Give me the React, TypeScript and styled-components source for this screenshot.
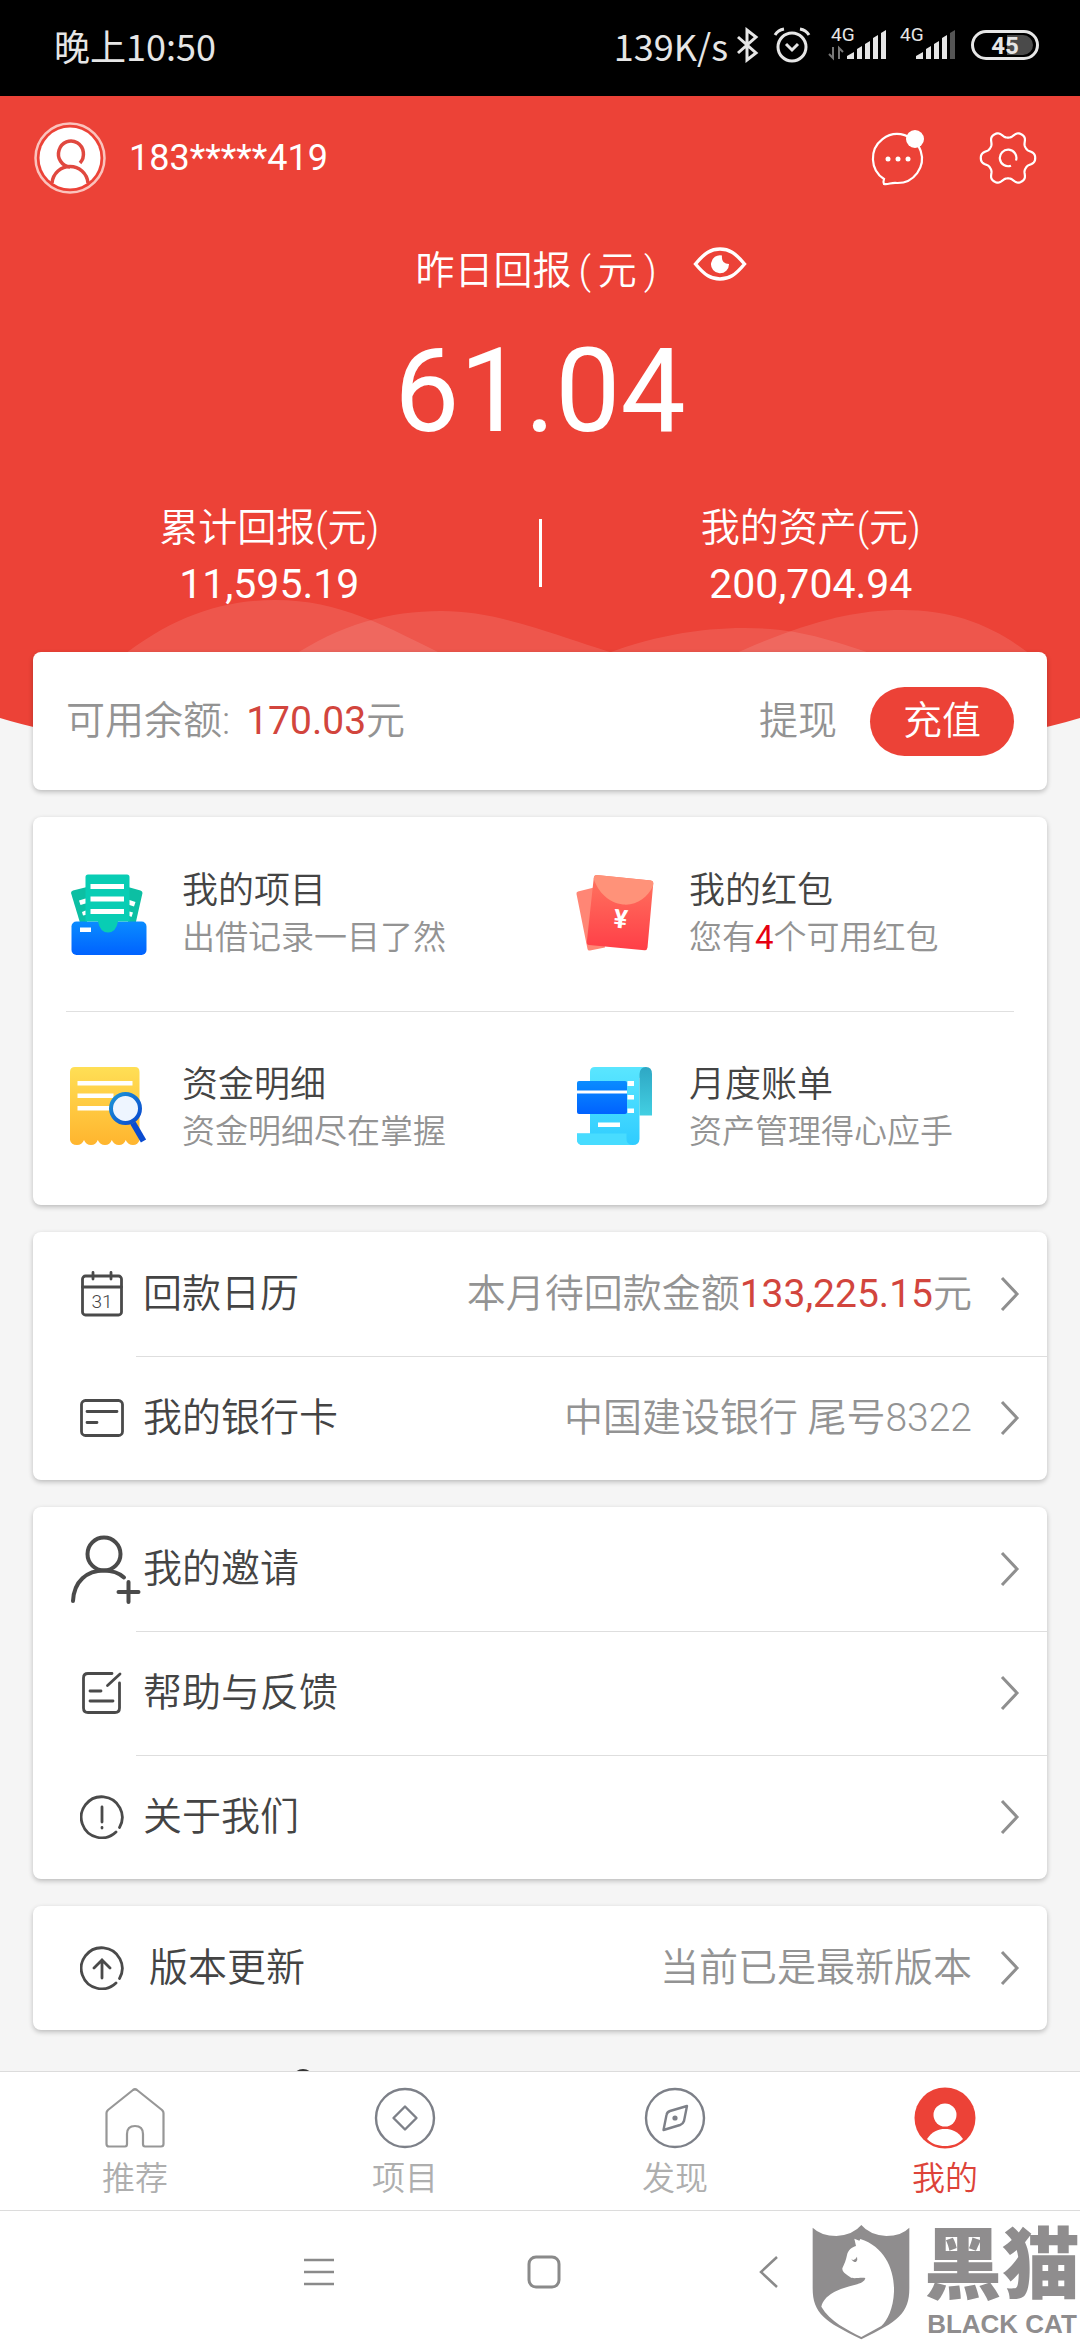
import React from "react";
import styled, { createGlobalStyle, css } from "styled-components";

const RED = "#ec4237";
const INK = "#444444";
const MUTED = "#939393";

const GlobalStyle = createGlobalStyle`
  *, *::before, *::after { box-sizing: border-box; }
  body {
    margin: 0;
    background: #f5f5f5;
    font-family: Roboto, "Noto Sans CJK SC", sans-serif;
    font-weight: 350;
    color: ${INK};
  }
  button {
    margin: 0;
    padding: 0;
    border: 0;
    background: none;
    font: inherit;
    color: inherit;
    cursor: pointer;
  }
  svg { display: block; flex: none; }
`;

const Page = styled.div`
  display: flex;
  flex-direction: column;
  height: 100vh;
`;

/* ---------- status bar ---------- */

const StatusBar = styled.div`
  flex: none;
  display: flex;
  align-items: center;
  justify-content: space-between;
  height: 96px;
  padding: 0 41px 6px 54px;
  background: #000;
  color: #e6e6e6;
  font-family: "Noto Sans CJK SC", sans-serif;
  font-size: 36px;
  font-weight: 400;
  line-height: 48px;
`;

const StatusIcons = styled.div`
  display: flex;
  align-items: center;
  gap: 8px;
`;

/* ---------- scrolling content ---------- */

const Content = styled.main`
  flex: 1;
  min-height: 0;
  overflow: hidden auto;
  scrollbar-width: none;
`;

const Hero = styled.header`
  position: relative;
  padding: 26px 43px 106px 34px;
  background: ${RED};
  color: #fff;
`;

const HeroCurve = styled.svg`
  position: absolute;
  left: 0;
  top: 100%;
  width: 100%;
  height: 60px;
`;

const HeroWaves = styled.svg`
  position: absolute;
  left: 0;
  bottom: 60px;
  width: 100%;
  height: 64px;
`;

const TopRow = styled.div`
  display: flex;
  align-items: center;
  height: 72px;
`;

const Phone = styled.span`
  flex: 1;
  margin-left: 23px;
  font-size: 36px;
  font-weight: 400;
  line-height: 50px;
`;

const TopActions = styled.div`
  display: flex;
  gap: 53px;
`;

const Overview = styled.section`
  position: relative;
  margin: 51px -43px 0 -34px;
`;

const YesterdayRow = styled.div`
  display: grid;
  grid-template-columns: 1fr auto 1fr;
  align-items: start;
  font-size: 39px;
  line-height: 52px;
`;

const YesterdayLabel = styled.div`
  grid-column: 2;
  display: flex;
  gap: 7px;
  padding-right: 8px;
`;

const EyeButton = styled.button`
  justify-self: start;
  margin-left: 28px;
`;

const BigNumber = styled.div`
  margin-top: 26px;
  font-size: 116px;
  font-weight: 400;
  line-height: 136px;
  text-align: center;
`;

const Stats = styled.div`
  display: grid;
  grid-template-columns: 1fr 3px 1fr;
  align-items: center;
  margin-top: 41px;
`;

const Stat = styled.div`
  display: flex;
  flex-direction: column;
  align-items: center;
  font-size: 39px;
  line-height: 56px;
`;

const StatValue = styled.span`
  font-size: 41px;
  font-weight: 400;
`;

const StatDivider = styled.span`
  height: 68px;
  margin-bottom: 6px;
  background: #fff;
`;

const Cards = styled.div`
  position: relative;
  display: flex;
  flex-direction: column;
  gap: 27px;
  margin: -66px 33px 0;
`;

const Card = styled.section`
  border-radius: 8px;
  background: #fff;
  box-shadow: 0 2px 5px rgba(0, 0, 0, 0.24);
`;

const BalanceCard = styled(Card)`
  display: flex;
  align-items: center;
  height: 138px;
  padding: 0 33px;
  font-size: 39px;
  line-height: 56px;
  color: ${MUTED};
`;

const BalanceText = styled.div`
  flex: 1;
`;

const Amount = styled.span<{ $spaced?: boolean }>`
  margin-left: ${(p) => (p.$spaced ? "16px" : "0")};
  font-weight: 400;
  color: #d2453d;
`;

const RechargeButton = styled.button`
  width: 144px;
  height: 69px;
  margin-left: 33px;
  border-radius: 35px;
  background: ${RED};
  color: #fff;
`;

const ShortcutGrid = styled(Card)`
  position: relative;
  display: grid;
  grid-template-columns: 1fr 1fr;

  &::after {
    content: "";
    position: absolute;
    left: 33px;
    right: 33px;
    top: 50%;
    height: 1px;
    background: #e0e0e0;
  }
`;

const Shortcut = styled.button`
  display: flex;
  align-items: center;
  gap: 31px;
  height: 194px;
  padding-left: 34px;
  text-align: left;
`;

const ShortcutText = styled.span`
  display: flex;
  flex-direction: column;
`;

const ShortcutTitle = styled.span`
  font-size: 36px;
  line-height: 48px;
`;

const ShortcutHint = styled.span`
  font-size: 33px;
  line-height: 46px;
  color: ${MUTED};
`;

const Count = styled.span`
  font-weight: 400;
  color: #e60012;
`;

const List = styled(Card)`
  display: flex;
  flex-direction: column;
`;

const ListRow = styled.button`
  position: relative;
  display: flex;
  align-items: center;
  height: 124px;
  padding: 0 27px 0 29px;
  font-size: 39px;
  line-height: 56px;

  & + &::before {
    content: "";
    position: absolute;
    left: 103px;
    right: 0;
    top: 0;
    height: 1px;
    background: #dedede;
  }
`;

const IconSlot = styled.span<{ $wide?: boolean }>`
  display: flex;
  justify-content: center;
  width: 80px;
  margin-right: ${(p) => (p.$wide ? "7px" : "1px")};
`;

const RowLabel = styled.span`
  flex: 1;
  text-align: left;
`;

const RowValue = styled.span`
  margin-right: 28px;
  color: ${MUTED};
`;

const FooterMark = styled.div`
  padding: 39px 0 40px 292px;
`;

/* ---------- bottom bars ---------- */

const TabBar = styled.nav`
  flex: none;
  display: grid;
  grid-template-columns: repeat(4, 1fr);
  height: 140px;
  border-top: 1px solid #dcdcdc;
  border-bottom: 1px solid #dcdcdc;
  background: #fff;
`;

const Tab = styled.button<{ $active?: boolean }>`
  display: flex;
  flex-direction: column;
  align-items: center;
  gap: 6px;
  padding-top: 15px;
  font-size: 33px;
  line-height: 48px;
  color: #aeaeae;
  ${(p) =>
    p.$active &&
    css`
      color: #dd4339;
    `}
`;

const SystemBar = styled.div`
  flex: none;
  position: relative;
  display: flex;
  justify-content: center;
  height: 129px;
  padding: 0 0 8px 8px;
  background: #fff;
`;

const SystemButton = styled.button`
  display: flex;
  align-items: center;
  justify-content: center;
  width: 225px;
`;

const Watermark = styled.div`
  position: absolute;
  right: 0;
  bottom: 0;
  display: flex;
  align-items: flex-end;
  gap: 14px;
  color: #8f8d8e;
`;

const WatermarkText = styled.div`
  display: flex;
  flex-direction: column;
  align-items: center;
  font-family: "Liberation Sans", "Noto Sans CJK SC", sans-serif;
  font-weight: 900;
`;

const WatermarkName = styled.span`
  font-size: 78px;
  line-height: 84px;
`;

const WatermarkLatin = styled.span`
  font-size: 26px;
  line-height: 32px;
`;

/* ---------- icons ---------- */

const Bluetooth = () => (
  <svg width="25" height="36" viewBox="0 0 25 36" fill="none" stroke="#e6e6e6" strokeWidth="3">
    <path d="M2 10 L20 26 L11 33 V3 L20 10 L2 26" />
  </svg>
);

const Alarm = () => (
  <svg width="48" height="36" viewBox="0 0 48 36" fill="none" stroke="#e6e6e6" strokeWidth="3">
    <circle cx="23" cy="20" r="14" />
    <path d="M17 17 L23 23 L29 17" />
    <path d="M6 8 Q9 3 15 2 M31 2 Q37 3 40 8" />
  </svg>
);

const Signal = ({ left, weak }: { left: number; weak?: boolean }) => (
  <svg width={weak ? 60 : 66} height="48" viewBox={`${-left} -6 ${weak ? 60 : 66} 48`} fill="#e6e6e6">
    <text x="0" y="14" fontSize="19" fontFamily="Roboto, sans-serif">4G</text>
    {!weak && <path d="M2 20 V31 L-2 27 M8 32 V21 L12 25" fill="none" stroke="#777" strokeWidth="2" />}
    <path d="M16 32 V29 L23 25 V32Z M26 32 V22 L31 19 V32Z M34 32 V17 L39 14 V32Z M42 32 V11 L47 8 V32Z" />
    <path d="M50 32 V6 L55 3 V32Z" fill={weak ? "#555" : "#e6e6e6"} />
  </svg>
);

const Battery = () => (
  <svg width="72" height="32" viewBox="0 0 72 32">
    <path d="M40 6 H56 A9 9 0 0 1 56 26 H40Z" fill="#4a4a4a" />
    <rect x="5.500" y="2.500" width="65" height="27" rx="13.500" fill="none" stroke="#e6e6e6" strokeWidth="3" />
    <text x="38" y="24.500" fontSize="24" fontFamily="Roboto, sans-serif" fontWeight="700" textAnchor="middle" fill="#e6e6e6">45</text>
  </svg>
);

const Avatar = () => (
  <svg width="72" height="72" viewBox="0 0 72 72" fill="none">
    <circle cx="36" cy="36" r="34.500" stroke="#fbc3bd" strokeWidth="2.500" />
    <circle cx="36" cy="36" r="30.500" fill="#fff" />
    <g stroke="#e0483f" strokeWidth="3.500">
      <path d="M46 41 A12.500 13 0 1 0 36 45" />
      <path d="M18 61 C19 51 27 44.500 36 44.500 C45 44.500 53 51 54 61" />
    </g>
  </svg>
);

const Message = () => (
  <svg width="56" height="60" viewBox="0 0 56 60" fill="none">
    <path d="M14 51 A24.500 24.500 0 1 1 27 55 C22 54 18 57 14 56 Q13 54 14 51Z" stroke="#fff" strokeWidth="2.200" />
    <circle cx="18" cy="31" r="2.500" fill="#fff" />
    <circle cx="28" cy="31" r="2.500" fill="#fff" />
    <circle cx="38" cy="31" r="2.500" fill="#fff" />
    <circle cx="45" cy="11" r="9" fill="#fff" />
  </svg>
);

const gearOutline = Array.from({ length: 180 }, (_, i) => {
  const a = (i / 180) * Math.PI * 2;
  const r = 23.8 + (3.4 * Math.tanh(1.3 * Math.cos(6 * a))) / Math.tanh(1.3);
  return `${(29 + r * Math.cos(a)).toFixed(2)} ${(29 + r * Math.sin(a)).toFixed(2)}`;
}).join(" L");

const Gear = () => (
  <svg width="58" height="58" viewBox="0 0 58 58" fill="none" stroke="#fff" strokeWidth="2.200">
    <path d={`M${gearOutline}Z`} />
    <path d="M37 31.500 A8.300 8.300 0 1 0 32 36.700" />
  </svg>
);

const Eye = () => (
  <svg width="54" height="38" viewBox="0 0 54 38" fill="none">
    <path d="M2.500 19 C12 7.500 18 4 27 4 C36 4 42 7.500 51.500 19 C42 30.500 36 34 27 34 C18 34 12 30.500 2.500 19Z" stroke="#fff" strokeWidth="3.400" />
    <path d="M29 10.500 A9 9 0 1 0 36 19 Q28 19 29 10.500Z" fill="#fff" />
  </svg>
);

const ProjectIcon = () => (
  <svg width="84" height="84" viewBox="0 0 84 84">
    <defs>
      <linearGradient id="tray" x1="0" y1="0" x2="0" y2="1">
        <stop offset="0" stopColor="#0a8cff" />
        <stop offset="1" stopColor="#0062ff" />
      </linearGradient>
    </defs>
    <path d="M4 21 Q4 19 6 18.500 L20 15 V54 H14Z" fill="#0cbfa3" />
    <path d="M75.500 21 Q75.500 19 73.500 18.500 L61 15 V54 H68Z" fill="#0cbfa3" />
    <rect x="4.500" y="49.500" width="75" height="33.500" rx="5" fill="url(#tray)" />
    <path d="M18.500 5 Q18.500 2.500 21 2.500 H60 Q62.500 2.500 62.500 5 V49.500 H51 Q49 60.500 41 60.500 Q33 60.500 31 49.500 H18.500Z" fill="#08cdb4" />
    <g fill="#fff">
      <rect x="23.500" y="12" width="33.500" height="5" />
      <rect x="23.500" y="24.500" width="33.500" height="5" />
      <rect x="23.500" y="37" width="33.500" height="5" />
      <path d="M12 28.500 L18.500 26.500 V31.500 L13.500 33Z M15 40 L18.500 38.500 V43 L16 43.500Z M62.500 28 L68.500 30 L67 34.500 L62.500 33Z M62.500 39.500 L66 40.500 L64.500 45 L62.500 44Z" />
      <rect x="13" y="55.500" width="11" height="4.500" />
    </g>
  </svg>
);

const PacketIcon = () => (
  <svg width="84" height="84" viewBox="0 0 84 84">
    <defs>
      <linearGradient id="packet" x1="0" y1="0" x2="0" y2="1">
        <stop offset="0" stopColor="#ff7560" />
        <stop offset="1" stopColor="#ff3e47" />
      </linearGradient>
    </defs>
    <path d="M2.500 22 Q2 20 4 19.500 L20 15.500 L31 75.500 L16 78.500 Q14 79 13.500 77Z" fill="#ff8675" />
    <path d="M22.500 3 L77 8.500 Q79.500 9 79.300 11 L73.500 75.500 Q73 78.500 70.500 78.200 L15 73 Q12.500 72.500 12.800 70 L19.800 5.500 Q20 3 22.500 3Z" fill="url(#packet)" />
    <path d="M22.500 3 L77 8.500 Q79.500 9 79.300 11 L79 14 C74 25 62 34 49 32.500 C35 31 24 20 19.800 7 Q20 3 22.500 3Z" fill="#ff9279" />
    <text x="46.500" y="56" transform="rotate(6 46.500 48)" fontSize="26" fontWeight="700" fontFamily="Roboto, sans-serif" textAnchor="middle" fill="#fff">¥</text>
  </svg>
);

const DetailIcon = () => (
  <svg width="84" height="84" viewBox="0 0 84 84">
    <defs>
      <linearGradient id="receipt" x1="0" y1="0" x2="0" y2="1">
        <stop offset="0" stopColor="#ffdf55" />
        <stop offset="1" stopColor="#ffb52e" />
      </linearGradient>
      <linearGradient id="lens" x1="0" y1="0" x2="1" y2="1">
        <stop offset="0" stopColor="#1c95d6" />
        <stop offset="1" stopColor="#0a48cf" />
      </linearGradient>
    </defs>
    <path d="M3 6 Q3 1 8 1 H68 Q72.500 1 72.500 6 V74 Q71 79 66 79 Q61 79 58.700 74 Q57 79 52 79 Q47 79 44.800 74 Q43 79 38 79 Q33 79 30.800 74 Q29 79 24 79 Q19 79 17 74 Q15 79 10 79 Q4 79 3 74Z" fill="url(#receipt)" />
    <g fill="#fff">
      <rect x="10.500" y="15" width="55" height="4.500" />
      <rect x="10.500" y="27.500" width="36" height="4.500" />
      <rect x="10.500" y="40" width="32" height="4.500" />
    </g>
    <path d="M66 57 L76.500 75" stroke="#0a4bd0" strokeWidth="6" />
    <circle cx="58.500" cy="42.500" r="14.500" fill="#eef5ff" stroke="url(#lens)" strokeWidth="4" />
  </svg>
);

const BillIcon = () => (
  <svg width="84" height="84" viewBox="0 0 84 84">
    <defs>
      <linearGradient id="bill" x1="0" y1="0" x2="0" y2="1">
        <stop offset="0" stopColor="#5ae6ff" />
        <stop offset="1" stopColor="#2fccff" />
      </linearGradient>
      <linearGradient id="fold" x1="0" y1="0" x2="0" y2="1">
        <stop offset="0" stopColor="#2ea7c4" />
        <stop offset="1" stopColor="#42cfe2" />
      </linearGradient>
      <linearGradient id="card" x1="0" y1="0" x2="0" y2="1">
        <stop offset="0" stopColor="#0a8cff" />
        <stop offset="1" stopColor="#0062ff" />
      </linearGradient>
    </defs>
    <path d="M16 6 Q16 1 21 1 H72 V8 L65.500 12 V73 Q65 79 59 79 H9 Q3 79 3 73 V67.500 H16Z" fill="url(#bill)" />
    <path d="M3 67.500 H52.500 V72 Q52 79 59 79 H9 Q3 79 3 73Z" fill="#48dcff" />
    <path d="M65.500 49.500 V8 Q66 1 72 1 Q78 1 78 8 V49.500Z" fill="url(#fold)" />
    <rect x="3" y="15" width="50" height="33" rx="2" fill="url(#card)" />
    <g fill="#fff">
      <rect x="3" y="24.500" width="50" height="3" />
      <rect x="53.500" y="15" width="6.500" height="5" />
      <rect x="53.500" y="29" width="6.500" height="4.500" />
      <rect x="53.500" y="42.500" width="6.500" height="4.500" />
      <rect x="24" y="56.500" width="22" height="4.500" />
    </g>
  </svg>
);

const line = { fill: "none", stroke: "#4a4a4a", strokeWidth: 2.8, strokeLinecap: "round" as const };

const CalendarIcon = () => (
  <svg width="44" height="46" viewBox="0 0 44 46" {...line}>
    <rect x="2.500" y="5" width="39" height="39" rx="3" />
    <path d="M2.500 16 H41.500 M13 1.500 V8 M31 1.500 V8" />
    <text x="22" y="36.500" fontSize="19" fontFamily="Roboto, sans-serif" textAnchor="middle" fill={INK} stroke="none">31</text>
  </svg>
);

const BankCardIcon = () => (
  <svg width="44" height="38" viewBox="0 0 44 38" {...line}>
    <rect x="1.500" y="1.500" width="41" height="35" rx="4" />
    <path d="M7 12.500 H37 M7 23.500 H17" />
  </svg>
);

const InviteIcon = () => (
  <svg width="78" height="76" viewBox="-5 -4 78 76" {...line} strokeWidth="4">
    <circle cx="36" cy="19" r="16.500" />
    <path d="M5 66 C6 46 19 35.500 36 35.500 C44 35.500 51 38 56 42.500 M60.500 47 V67 M50.500 57 H70.500" />
  </svg>
);

const FeedbackIcon = () => (
  <svg width="44" height="44" viewBox="0 0 44 44" {...line}>
    <path d="M32 2.500 H8 Q3.500 2.500 3.500 7 V37 Q3.500 41.500 8 41.500 H35 Q39.500 41.500 39.500 37 V12 M27.500 14.500 L40 3 M10 20 H21 M10 30 H33" />
  </svg>
);

const AboutIcon = () => (
  <svg width="44" height="44" viewBox="0 0 44 44" {...line}>
    <path d="M39.500 32.500 A20.500 20.500 0 1 0 36 37 M22 12 V27 M22 32.500 V33" />
  </svg>
);

const UpdateIcon = () => (
  <svg width="44" height="44" viewBox="0 0 44 44" {...line}>
    <path d="M39.500 32.500 A20.500 20.500 0 1 0 36 37 M22 32 V14 M14 22 L22 14 L30 22" />
  </svg>
);

const Chevron = () => (
  <svg width="20" height="36" viewBox="0 0 20 36" fill="none" stroke="#8f8f8f" strokeWidth="3">
    <path d="M2 2 L17 18 L2 34" />
  </svg>
);

const HomeIcon = () => (
  <svg width="62" height="62" viewBox="0 0 62 62" fill="none" stroke="#979797" strokeWidth="2.200" strokeLinejoin="round">
    <path d="M29 3 Q31 1.500 33 3 L58 23 Q59.500 24.500 59.500 26 V57 Q59.500 59.500 57 59.500 H41 Q39 59.500 39 57 V47 Q39 39 31 39 Q23 39 23 47 V57 Q23 59.500 21 59.500 H5 Q2.500 59.500 2.500 57 V26 Q2.500 24.500 4 23Z" />
  </svg>
);

const CoinIcon = () => (
  <svg width="62" height="62" viewBox="0 0 62 62" fill="none" stroke="#7d8088" strokeWidth="2.400" strokeLinejoin="round">
    <circle cx="31" cy="31" r="29" />
    <path d="M31 19.500 L42.500 31 L31 42.500 L19.500 31Z" />
  </svg>
);

const CompassIcon = () => (
  <svg width="62" height="62" viewBox="0 0 62 62" fill="none" stroke="#7d8088" strokeWidth="2.400" strokeLinejoin="round">
    <circle cx="31" cy="31" r="29" />
    <path d="M43 19 L40 34 Q39 37 36 38 L19.500 43 L22.500 28 Q23 25 26 24Z" />
    <circle cx="31" cy="31" r="2.600" fill="#7d8088" stroke="none" />
  </svg>
);

const MeIcon = () => (
  <svg width="62" height="62" viewBox="0 0 62 62">
    <circle cx="31" cy="31" r="30.500" fill={RED} />
    <circle cx="31" cy="28" r="11.500" fill="#fff" />
    <path d="M13 52 C18 44.500 24 42 31 42 C38 42 44 44.500 49 52 C44 57 38 59 31 59 C24 59 18 57 13 52Z" fill="#fff" />
  </svg>
);

const MenuGlyph = () => (
  <svg width="32" height="32" viewBox="0 0 32 32" stroke="#8a8a8a" strokeWidth="2.500">
    <path d="M1 4 H31 M1 16 H31 M1 28 H31" />
  </svg>
);

const HomeGlyph = () => (
  <svg width="34" height="34" viewBox="0 0 34 34" fill="none" stroke="#8a8a8a" strokeWidth="3">
    <rect x="2" y="2" width="30" height="30" rx="7" />
  </svg>
);

const BackGlyph = () => (
  <svg width="20" height="34" viewBox="0 0 20 34" fill="none" stroke="#8a8a8a" strokeWidth="2.500">
    <path d="M18 2 L2 17 L18 32" />
  </svg>
);

const ShieldCat = () => (
  <svg width="98" height="116" viewBox="92 522 294 348">
    <path d="M94 533 Q120 558 165 558 Q215 555 240 525 Q265 555 315 558 Q360 558 384 533 V715 C384 790 350 815 240 868 C130 815 94 790 94 715Z" fill="#8f8d8e" />
    <path d="M219 566 L234 572 L237 567 C310 590 340 660 338 725 C336 775 318 812 300 828 L240 861 C200 840 145 815 120 770 C130 730 180 715 222 704 C238 700 250 695 252 684 C235 682 215 688 207 682 C200 675 182 668 183 655 C190 640 194 630 197 615 C200 600 212 592 224 588Z" fill="#fff" />
    <path d="M210 626 Q218 636 227 620 Q230 630 224 636 Q214 636 210 626Z" fill="#8f8d8e" />
  </svg>
);

/* ---------- page ---------- */

type Row = { label: string; icon: React.ReactNode; value?: React.ReactNode; wide?: boolean };

const groups: Row[][] = [
  [
    {
      label: "回款日历",
      icon: <CalendarIcon />,
      value: (
        <>
          本月待回款金额<Amount>133,225.15</Amount>元
        </>
      ),
    },
    { label: "我的银行卡", icon: <BankCardIcon />, value: "中国建设银行 尾号8322" },
  ],
  [
    { label: "我的邀请", icon: <InviteIcon /> },
    { label: "帮助与反馈", icon: <FeedbackIcon /> },
    { label: "关于我们", icon: <AboutIcon /> },
  ],
  [{ label: "版本更新", icon: <UpdateIcon />, value: "当前已是最新版本", wide: true }],
];

const shortcuts = [
  { title: "我的项目", hint: "出借记录一目了然", icon: <ProjectIcon /> },
  {
    title: "我的红包",
    hint: (
      <>
        您有<Count>4</Count>个可用红包
      </>
    ),
    icon: <PacketIcon />,
  },
  { title: "资金明细", hint: "资金明细尽在掌握", icon: <DetailIcon /> },
  { title: "月度账单", hint: "资产管理得心应手", icon: <BillIcon /> },
];

const tabs = [
  { label: "推荐", icon: <HomeIcon /> },
  { label: "项目", icon: <CoinIcon /> },
  { label: "发现", icon: <CompassIcon /> },
  { label: "我的", icon: <MeIcon />, active: true },
];

export default function App() {
  return (
    <Page>
      <GlobalStyle />
      <StatusBar>
        <span>晚上10:50</span>
        <StatusIcons>
          <span>139K/s</span>
          <Bluetooth />
          <Alarm />
          <Signal left={6} />
          <Signal left={1} weak />
          <Battery />
        </StatusIcons>
      </StatusBar>

      <Content>
        <Hero>
          <HeroCurve viewBox="0 0 1080 60" preserveAspectRatio="none" aria-hidden>
            <path d="M0 0 Q150 46 540 50 Q930 46 1080 0Z" fill={RED} />
          </HeroCurve>
          <HeroWaves viewBox="0 0 1080 64" preserveAspectRatio="none" aria-hidden>
            <g fill="#fff" fillOpacity="0.110">
              <path d="M120 64 C170 24 220 6 275 6 C340 6 385 32 450 64Z" />
              <path d="M290 64 C340 30 390 17 441 17 C500 17 550 40 630 64Z" />
              <path d="M595 64 C650 42 700 34 744 34 C800 34 830 46 885 64Z" />
              <path d="M725 64 C800 30 850 16 902 16 C955 16 995 32 1035 64Z" />
            </g>
          </HeroWaves>
          <TopRow>
            <Avatar />
            <Phone>183*****419</Phone>
            <TopActions>
              <button aria-label="消息"><Message /></button>
              <button aria-label="设置"><Gear /></button>
            </TopActions>
          </TopRow>
          <Overview>
            <YesterdayRow>
              <YesterdayLabel>
                <span>昨日回报</span>
                <span>(</span>
                <span>元</span>
                <span>)</span>
              </YesterdayLabel>
              <EyeButton aria-label="隐藏金额"><Eye /></EyeButton>
            </YesterdayRow>
            <BigNumber>61.04</BigNumber>
            <Stats>
              <Stat>
                <span>累计回报(元)</span>
                <StatValue>11,595.19</StatValue>
              </Stat>
              <StatDivider />
              <Stat>
                <span>我的资产(元)</span>
                <StatValue>200,704.94</StatValue>
              </Stat>
            </Stats>
          </Overview>
        </Hero>

        <Cards>
          <BalanceCard>
            <BalanceText>
              可用余额:<Amount $spaced>170.03</Amount>元
            </BalanceText>
            <button>提现</button>
            <RechargeButton>充值</RechargeButton>
          </BalanceCard>

          <ShortcutGrid>
            {shortcuts.map((s) => (
              <Shortcut key={s.title}>
                {s.icon}
                <ShortcutText>
                  <ShortcutTitle>{s.title}</ShortcutTitle>
                  <ShortcutHint>{s.hint}</ShortcutHint>
                </ShortcutText>
              </Shortcut>
            ))}
          </ShortcutGrid>

          {groups.map((rows) => (
            <List key={rows[0].label}>
              {rows.map((row) => (
                <ListRow key={row.label}>
                  <IconSlot $wide={row.wide}>{row.icon}</IconSlot>
                  <RowLabel>{row.label}</RowLabel>
                  {row.value && <RowValue>{row.value}</RowValue>}
                  <Chevron />
                </ListRow>
              ))}
            </List>
          ))}
        </Cards>

        <FooterMark aria-hidden>
          <svg width="22" height="22" viewBox="0 0 22 22">
            <circle cx="11" cy="11" r="9.500" fill="none" stroke="#333" strokeWidth="3" />
          </svg>
        </FooterMark>
      </Content>

      <TabBar>
        {tabs.map((t) => (
          <Tab key={t.label} $active={t.active}>
            {t.icon}
            <span>{t.label}</span>
          </Tab>
        ))}
      </TabBar>

      <SystemBar>
        <SystemButton aria-label="菜单"><MenuGlyph /></SystemButton>
        <SystemButton aria-label="主屏幕"><HomeGlyph /></SystemButton>
        <SystemButton aria-label="返回"><BackGlyph /></SystemButton>
        <Watermark>
          <ShieldCat />
          <WatermarkText>
            <WatermarkName>黑猫</WatermarkName>
            <WatermarkLatin>BLACK CAT</WatermarkLatin>
          </WatermarkText>
        </Watermark>
      </SystemBar>
    </Page>
  );
}
